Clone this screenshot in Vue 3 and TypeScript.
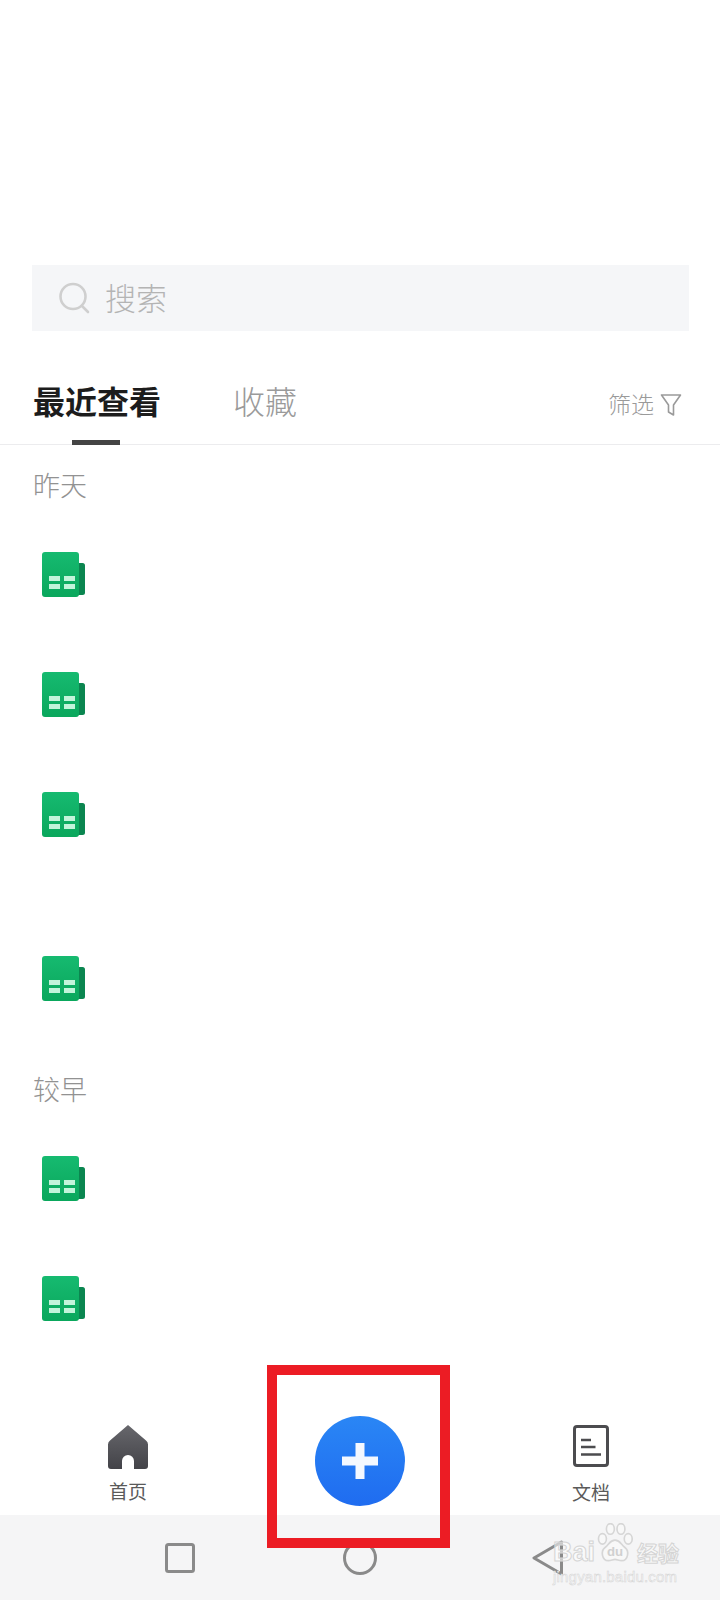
<template>
  <div class="page">
    <div class="search">
      <svg class="search-icon" viewBox="0 0 32 32" width="32" height="32" aria-hidden="true">
        <circle cx="15" cy="14.5" r="12.5" fill="none" stroke="#cfcfcf" stroke-width="2.6" />
        <path d="M24 24l6 6" fill="none" stroke="#cfcfcf" stroke-width="2.6" stroke-linecap="round" />
      </svg>
      <span class="search-text">搜索</span>
    </div>

    <div class="tabs">
      <div class="tab active">最近查看<i class="tab-line"></i></div>
      <div class="tab">收藏</div>
      <div class="filter">
        <span>筛选</span>
        <svg viewBox="0 0 22 24" width="22" height="24" aria-hidden="true">
          <path d="M1.500 2h19l-7 10v10l-5-3v-7z" fill="none" stroke="#9a9a9a" stroke-width="1.600" stroke-linejoin="round" />
        </svg>
      </div>
    </div>

    <div v-for="group in groups" :key="group.title" class="group">
      <div class="group-title" :class="group.cls">{{ group.title }}</div>
      <div v-for="row in group.rows" :key="row.id" class="row" :class="{ tall: row.tall }">
        <svg class="sheet" viewBox="0 0 43 45" width="43" height="45" aria-hidden="true">
          <path d="M32 11h8.500a2.500 2.500 0 0 1 2.500 2.500v27a2.500 2.500 0 0 1-2.500 2.500H30z" fill="#0b8650" />
          <rect width="37" height="45" rx="3" fill="url(#sheetFill)" />
          <g fill="#c2f4da">
            <rect x="7" y="24" width="11" height="5" />
            <rect x="7" y="32" width="11" height="5" />
            <rect x="22" y="24" width="11" height="5" />
            <rect x="22" y="32" width="11" height="5" />
          </g>
        </svg>
      </div>
    </div>

    <svg class="defs" width="0" height="0" aria-hidden="true">
      <defs>
        <linearGradient id="sheetFill" x1="0" y1="0" x2="0" y2="1">
          <stop offset="0" stop-color="#16ba70" />
          <stop offset="1" stop-color="#0aa75c" />
        </linearGradient>
        <linearGradient id="homeFill" x1="0" y1="0" x2="0" y2="1">
          <stop offset="0" stop-color="#67676c" />
          <stop offset="1" stop-color="#434348" />
        </linearGradient>
        <linearGradient id="addFill" x1="0" y1="0" x2="0" y2="1">
          <stop offset="0" stop-color="#2a86f5" />
          <stop offset="1" stop-color="#1f6cf0" />
        </linearGradient>
      </defs>
    </svg>

    <div class="tabbar">
      <div class="tabbar-item">
        <svg viewBox="0 0 40 44" width="40" height="44" aria-hidden="true">
          <path d="M20 0L38 15.500a5 5 0 0 1 2 4V41a3 3 0 0 1-3 3H26V36a6 6 0 0 0-12 0v8H3a3 3 0 0 1-3-3V19.500a5 5 0 0 1 2-4z" fill="url(#homeFill)" />
        </svg>
        <span>首页</span>
      </div>
      <svg class="add" viewBox="0 0 90 90" width="90" height="90" aria-hidden="true">
        <path d="M45 0a45 45 0 1 0 0 90a45 45 0 1 0 0-90z" fill="url(#addFill)" />
        <path d="M40.500 27h9v13.500H63v9H49.500V63h-9V49.500H27v-9h13.500z" fill="#f4f8ff" />
      </svg>
      <div class="tabbar-item doc">
        <svg viewBox="0 0 36 42" width="36" height="42" aria-hidden="true">
          <rect x="1.500" y="1.500" width="33" height="39" rx="2.500" fill="none" stroke="#4c4c4f" stroke-width="3" />
          <path d="M8 15h10M8 22h14.500M8 29.500h20" fill="none" stroke="#4c4c4f" stroke-width="2.600" />
        </svg>
        <span>文档</span>
      </div>
    </div>

    <div class="sysbar">
      <svg viewBox="0 0 30 30" width="30" height="30" aria-hidden="true">
        <rect x="1.500" y="1.500" width="27" height="27" rx="2" fill="none" stroke="#8a8a8a" stroke-width="3" />
      </svg>
      <svg viewBox="0 0 34 34" width="34" height="34" aria-hidden="true">
        <circle cx="17" cy="17" r="15.500" fill="none" stroke="#8a8a8a" stroke-width="3" />
      </svg>
      <svg class="back" viewBox="0 0 31 36" width="31" height="36" aria-hidden="true">
        <path d="M29.500 2L2 18l27.500 16z" fill="none" stroke="#8a8a8a" stroke-width="3" stroke-linejoin="round" />
      </svg>
    </div>

    <!-- callout round the add button -->
    <div class="callout"></div>

    <div class="watermark">
      <div class="wm-top">
        <span class="wm-bai">Bai</span>
        <svg class="paw" viewBox="0 0 54 62" width="36" height="41" aria-hidden="true">
          <g fill="#f8f8f8" stroke="#d6d6d6" stroke-width="2.500">
            <ellipse cx="8" cy="24" rx="6" ry="8" />
            <ellipse cx="20" cy="9" rx="6" ry="8" />
            <ellipse cx="36" cy="9" rx="6" ry="8" />
            <ellipse cx="47" cy="24" rx="6" ry="8" />
            <path d="M27 26c-8 0-9 7-15 11-7 5-5 20 5 20 4 0 7-2 10-2s6 2 10 2c10 0 12-15 5-20-6-4-7-11-15-11z" />
          </g>
          <text x="27" y="50" text-anchor="middle" class="wm-du">du</text>
        </svg>
        <span class="wm-cn">经验</span>
      </div>
      <div class="wm-url">jingyan.baidu.com</div>
    </div>
  </div>
</template>

<script setup lang="ts">
interface Row {
  id: number
  tall?: boolean
}

interface Group {
  title: string
  cls: string
  rows: Row[]
}

const groups: Group[] = [
  { title: '昨天', cls: 'first', rows: [{ id: 1 }, { id: 2 }, { id: 3 }, { id: 4, tall: true }] },
  { title: '较早', cls: 'later', rows: [{ id: 5 }, { id: 6 }] },
]
</script>

<style scoped>
.page {
  position: relative;
  width: 720px;
  height: 1600px;
  padding-top: 265px;
  box-sizing: border-box;
  display: flex;
  flex-direction: column;
  overflow: hidden;
  background: #fff;
  font-family: "Noto Sans CJK SC", "Noto Sans", sans-serif;
}

.search {
  margin: 0 31px 0 32px;
  height: 66px;
  display: flex;
  align-items: center;
  padding-left: 26px;
  background: #f5f6f8;
}
.search-icon {
  flex: none;
}
.search-text {
  margin-left: 15px;
  margin-top: -3px;
  font-size: 31px;
  font-weight: 300;
  line-height: 1;
  color: #b4b4b4;
}

.tabs {
  height: 114px;
  box-sizing: border-box;
  display: flex;
  align-items: center;
  padding: 24px 38px 0 33px;
  border-bottom: 1px solid #ececee;
}
.tab {
  position: relative;
  font-size: 32px;
  font-weight: 300;
  line-height: 40px;
  color: #9a9a9a;
  margin-right: 72px;
}
.tab.active {
  font-weight: 700;
  color: #1c1c1c;
}
.tab-line {
  position: absolute;
  left: 39px;
  bottom: -25px;
  width: 48px;
  height: 5px;
  background: #444;
}
.filter {
  margin-left: auto;
  margin-top: 7px;
  display: flex;
  align-items: center;
  gap: 6px;
  font-size: 23px;
  font-weight: 300;
  color: #9a9a9a;
}
.filter svg {
  margin-top: 3px;
}

.group-title {
  padding-left: 33px;
  font-size: 27px;
  font-weight: 300;
  line-height: 34px;
  color: #929292;
}
.group-title.first {
  padding-top: 23px;
  padding-bottom: 12px;
}
.group-title.later {
  padding-top: 34px;
  padding-bottom: 12px;
}

.row {
  height: 120px;
  display: flex;
  align-items: center;
  padding-left: 42px;
}
.row.tall {
  margin-top: 44px;
}

.defs {
  position: absolute;
}

.tabbar {
  margin-top: auto;
  height: 157px;
  box-sizing: border-box;
  display: flex;
  justify-content: space-between;
  align-items: flex-start;
  padding: 67px 109px 0 108px;
}
.tabbar-item {
  width: 40px;
  display: flex;
  flex-direction: column;
  align-items: center;
  gap: 10px;
}
.tabbar-item.doc {
  gap: 13px;
}
.tabbar-item span {
  font-size: 19px;
  line-height: 24px;
  color: #5a5a5a;
  white-space: nowrap;
}
.add {
  margin-top: -9px;
}

.sysbar {
  height: 85px;
  flex: none;
  display: flex;
  align-items: center;
  gap: 148px;
  padding-left: 165px;
  background: #f5f5f6;
}
.back {
  margin-left: 7px;
}

.callout {
  position: absolute;
  left: 267px;
  top: 1365px;
  width: 183px;
  height: 183px;
  box-sizing: border-box;
  border: 10px solid #ec1c24;
}

.watermark {
  position: absolute;
  left: 553px;
  top: 1523px;
  width: 130px;
  font-family: "Liberation Sans", sans-serif;
}
.wm-top {
  display: flex;
  align-items: flex-end;
  height: 41px;
  white-space: nowrap;
}
.wm-bai {
  width: 44px;
  font-size: 27px;
  line-height: 24px;
  font-weight: 700;
  color: rgba(255, 255, 255, 0.55);
  -webkit-text-stroke: 1px #d4d4d4;
}
.paw {
  flex: none;
}
.wm-du {
  font-family: "Liberation Sans", sans-serif;
  font-size: 20px;
  font-weight: 700;
  fill: #d0d0d0;
}
.wm-cn {
  margin-left: 4px;
  font-family: "Noto Sans CJK SC", sans-serif;
  font-size: 21px;
  line-height: 24px;
  font-weight: 700;
  color: #f8f8f8;
  -webkit-text-stroke: 1px #d4d4d4;
}
.wm-url {
  font-size: 15px;
  letter-spacing: 0.2px;
  line-height: 16px;
  margin-top: 5px;
  color: #f8f8f8;
  -webkit-text-stroke: 0.5px #d4d4d4;
  white-space: nowrap;
}
</style>
